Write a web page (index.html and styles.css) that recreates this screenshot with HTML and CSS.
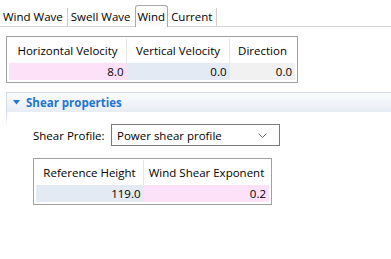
FILE: index.html
```html
<!DOCTYPE html>
<html>
<head>
    <meta charset="UTF-8">
    <title>Wind</title>
    <link rel="stylesheet" href="styles.css">
</head>
<body>
    <div class="tabs">
        <div class="tab">Wind Wave</div>
        <div class="tab">Swell Wave</div>
        <div class="tab active">Wind</div>
        <div class="tab">Current</div>
    </div>

    <div class="page">
        <div class="grid grid-wind">
            <table>
                <tr>
                    <th class="c-hv">Horizontal Velocity</th>
                    <th class="c-vv">Vertical Velocity</th>
                    <th class="c-dir">Direction</th>
                </tr>
                <tr>
                    <td class="pink">8.0</td>
                    <td class="blue">0.0</td>
                    <td class="gray">0.0</td>
                </tr>
            </table>
        </div>

        <div class="section">
            <div class="section-head">
                <svg class="caret" width="8" height="5" viewBox="0 0 8 5"><path d="M0 0H7L3.5 4.5Z" fill="#2274d4"/></svg>
                <span>Shear properties</span>
            </div>
            <div class="section-body">
                <div class="field">
                    <label>Shear Profile:</label>
                    <div class="select">
                        <span>Power shear profile</span>
                        <svg width="9" height="5" viewBox="0 0 9 5"><path d="M0.5 0.5L4.5 4.5L8.5 0.5" fill="none" stroke="#6d6d6d" stroke-width="1"/></svg>
                    </div>
                </div>

                <div class="grid grid-shear">
                    <table>
                        <tr>
                            <th class="c-rh">Reference Height</th>
                            <th class="c-wse">Wind Shear Exponent</th>
                        </tr>
                        <tr>
                            <td class="blue">119.0</td>
                            <td class="pink">0.2</td>
                        </tr>
                    </table>
                </div>
            </div>
        </div>
    </div>
</body>
</html>
```

FILE: styles.css
```css
body {
    margin: 0;
    font-family: 'Segoe UI', 'Open Sans', sans-serif;
    font-size: 11.5px;
    color: #000;
    background-color: #fff;
}

/* tab strip */
.tabs {
    display: flex;
    align-items: flex-end;
    height: 26px;
    border-bottom: 1px solid #d6d6d6;
}

.tab {
    height: 18px;
    line-height: 17px;
    padding: 0 4px 0 3px;
    border-right: 1px solid #cfcfcf;
}

.tab.active {
    height: 21px;
    line-height: 22px;
    padding: 0 2px;
    margin-left: -1px;
    margin-bottom: -1px;
    border: 1px solid #a9a9a9;
    border-bottom: none;
    border-radius: 3px 3px 0 0;
    background: linear-gradient(#fff, #fbfbfb);
}

/* content */
.page {
    padding: 9px 0 0 6px;
}

.grid {
    border: 1px solid #a0a0a0;
    padding: 1px 2px 2px 2px;
    display: inline-block;
}

.grid table {
    border-collapse: collapse;
}

th {
    font-weight: normal;
    height: 25px;
    padding: 0;
    text-align: center;
    border-left: 1px solid #e6e6e6;
}

th:first-child {
    border-left: none;
}

td {
    height: 17px;
    padding: 0 3px 0 0;
    text-align: right;
    line-height: 17px;
}

.pink { background-color: #fde1f8; }
.blue { background-color: #e4eaf4; }
.gray { background-color: #f1f1f1; }

.c-hv { width: 117px; }
.c-vv { width: 102px; }
.c-dir { width: 65px; }

.c-rh { width: 107px; }
.c-wse { width: 125px; }

/* collapsible section */
.section {
    margin-top: 6px;
}

.section-head {
    display: flex;
    align-items: center;
    height: 19px;
    padding-left: 6px;
    border-top: 1px solid #d3dae4;
    border-left: 1px solid #d3dae4;
    background: linear-gradient(#fbfcfd, #e7edf5);
    color: #2274d4;
    font-weight: bold;
    font-size: 11.5px;
}

.caret {
    margin-right: 5px;
}

.section-body {
    padding: 12px 0 0 27px;
    background: linear-gradient(#d3dae4, rgba(211, 218, 228, 0)) no-repeat 0 0 / 1px 14px;
}

.field {
    display: flex;
    align-items: center;
}

.field label {
    width: 78px;
}

.select {
    display: flex;
    align-items: center;
    justify-content: space-between;
    width: 150px;
    height: 20px;
    padding: 0 12px 0 5px;
    border: 1px solid #7a7a7a;
}

.grid-shear {
    margin-top: 12px;
}
```
